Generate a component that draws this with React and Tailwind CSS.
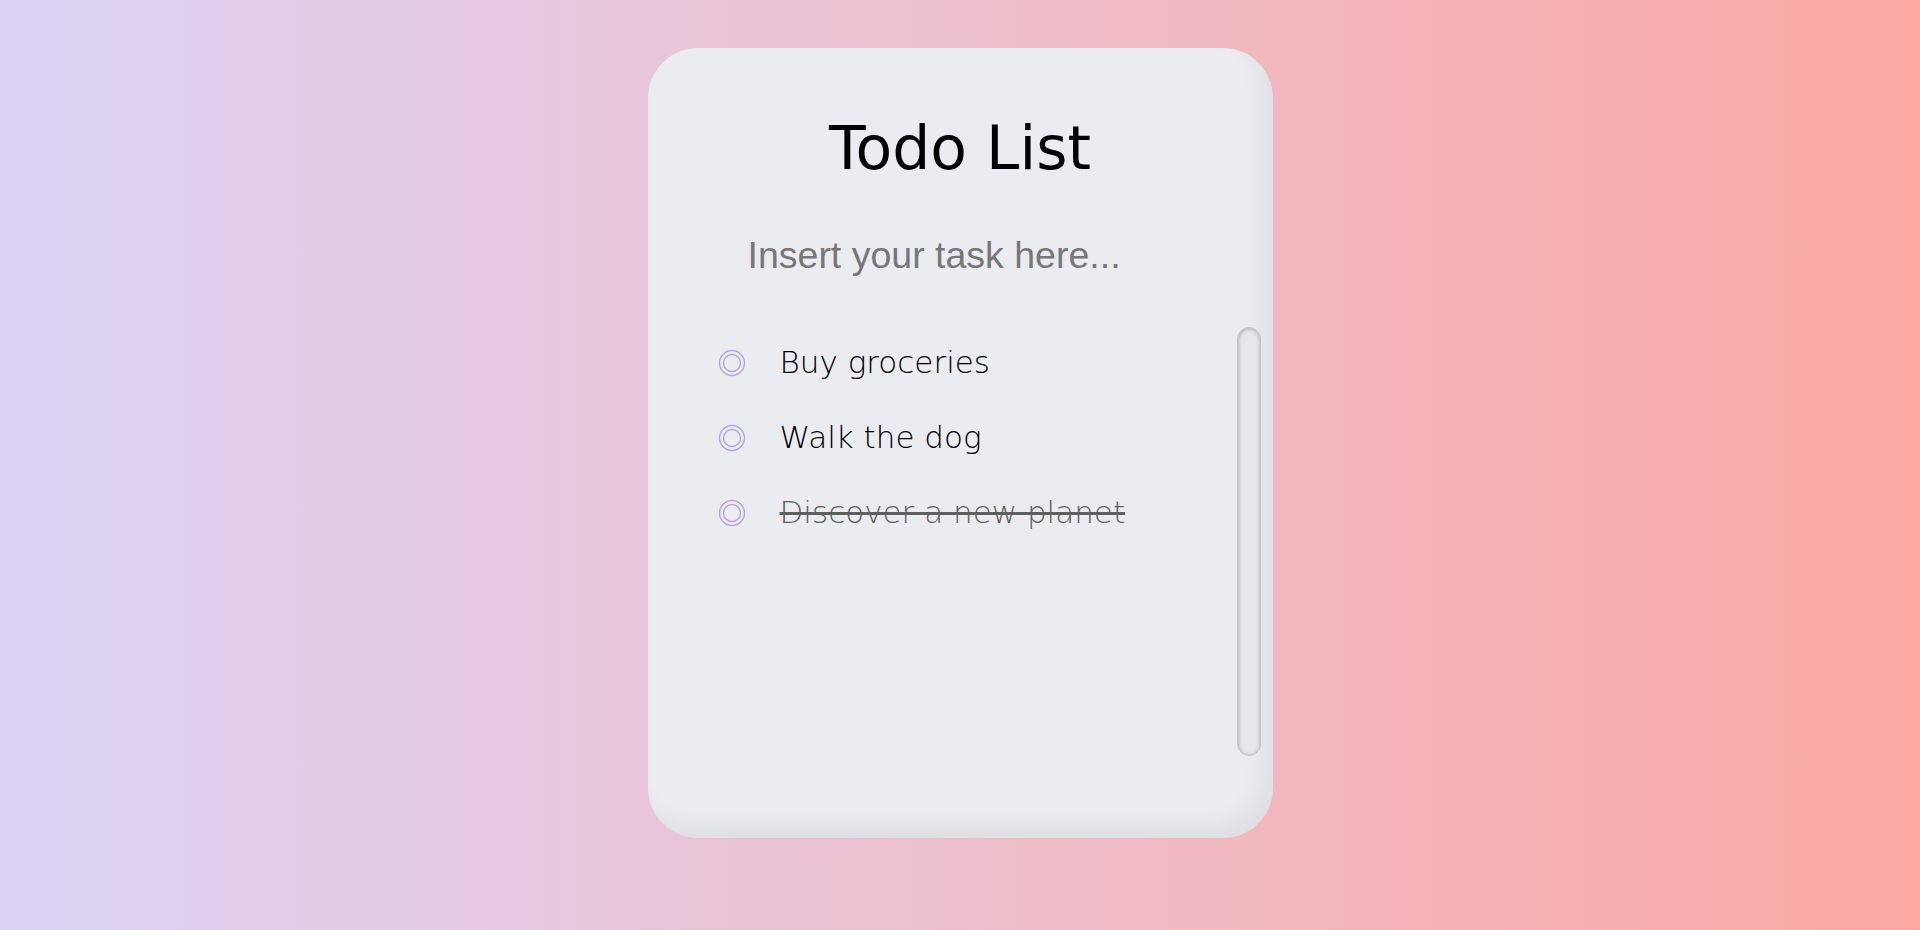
import { useState } from "react";

function Ring() {
  return (
    <svg width="28" height="28" viewBox="0 0 28 28" fill="none" className="shrink-0">
      <circle cx="14" cy="14" r="12.5" stroke="#b8a3de" strokeWidth="1.4" />
      <circle cx="14" cy="14" r="8.5" stroke="#b8a3de" strokeWidth="1.4" />
    </svg>
  );
}

export default function App() {
  const [todos] = useState([
    { id: 1, text: "Buy groceries", done: false },
    { id: 2, text: "Walk the dog", done: false },
    { id: 3, text: "Discover a new planet", done: true },
  ]);

  return (
    <div className="min-h-screen flex justify-center pt-[48px] bg-gradient-to-r from-[#dcd4f6] to-[#fba8a2]">
      <div className="w-[625px] h-[790px] rounded-[50px] bg-[#ebecf0] shadow-[inset_-12px_-14px_20px_rgba(0,0,0,0.05)] flex flex-col">
        <h1 className="mt-[65px] text-center text-[60px] leading-[70px] text-black font-['DejaVu_Sans',sans-serif]">
          Todo List
        </h1>
        <input
          type="text"
          placeholder="Insert your task here..."
          className="mt-[51px] ml-[100px] w-[420px] bg-transparent outline-none text-[37.5px] leading-[43px] text-[#333] placeholder:text-[#777] font-['Liberation_Sans',Arial,sans-serif]"
        />
        <div className="mt-[48px] flex pl-[70px] pr-[12px]">
          <ul className="flex-1">
            {todos.map(t => (
              <li key={t.id} className="h-[75px] flex items-center gap-[34px]">
                <Ring />
                <span
                  className={
                    "text-[31px] leading-[35px] font-['DejaVu_Sans',sans-serif] font-extralight " +
                    (t.done ? "line-through text-[#5f5f5f]" : "text-black")
                  }
                >
                  {t.text}
                </span>
              </li>
            ))}
          </ul>
          <div className="mt-[2px] w-[24px] h-[429px] rounded-full border border-[#c4c4c8] bg-[#e6e7ea] shadow-[inset_2px_0_3px_rgba(0,0,0,0.12),inset_-2px_0_3px_rgba(0,0,0,0.08),inset_0_3px_3px_rgba(0,0,0,0.08)]"></div>
        </div>
      </div>
    </div>
  );
}
